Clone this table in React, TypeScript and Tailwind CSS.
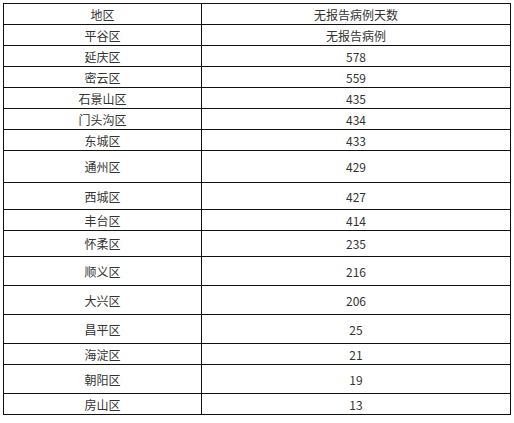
const rows: { name: string; value: string; h: string }[] = [
  { name: "平谷区", value: "无报告病例", h: "h-[21px]" },
  { name: "延庆区", value: "578", h: "h-[21px]" },
  { name: "密云区", value: "559", h: "h-[21px]" },
  { name: "石景山区", value: "435", h: "h-[21px]" },
  { name: "门头沟区", value: "434", h: "h-[21px]" },
  { name: "东城区", value: "433", h: "h-[21px]" },
  { name: "通州区", value: "429", h: "h-[32px]" },
  { name: "西城区", value: "427", h: "h-[27px]" },
  { name: "丰台区", value: "414", h: "h-[21px]" },
  { name: "怀柔区", value: "235", h: "h-[26px]" },
  { name: "顺义区", value: "216", h: "h-[29px]" },
  { name: "大兴区", value: "206", h: "h-[29px]" },
  { name: "昌平区", value: "25", h: "h-[29px]" },
  { name: "海淀区", value: "21", h: "h-[21px]" },
  { name: "朝阳区", value: "19", h: "h-[29px]" },
  { name: "房山区", value: "13", h: "h-[21px]" },
];

function Row({ name, value, h }: { name: string; value: string; h: string }) {
  return (
    <div className={`grid grid-cols-[197px_1fr] border-t border-[#111] ${h}`}>
      <div className="flex items-center justify-center pt-px">{name}</div>
      <div className="flex items-center justify-center border-l border-[#111] pt-px">
        {value}
      </div>
    </div>
  );
}

export default function App() {
  return (
    <div
      className="min-h-[423px] w-[514px] bg-white pl-[3px] pt-[3px] text-[12px] leading-none text-[#333]"
      style={{ fontFamily: '"Noto Sans CJK SC", "Noto Sans", sans-serif' }}
    >
      <div className="w-[508px] border-x border-b border-[#111]">
        <Row name="地区" value="无报告病例天数" h="h-[21px]" />
        {rows.map((r) => (
          <Row key={r.name} {...r} />
        ))}
      </div>
    </div>
  );
}
